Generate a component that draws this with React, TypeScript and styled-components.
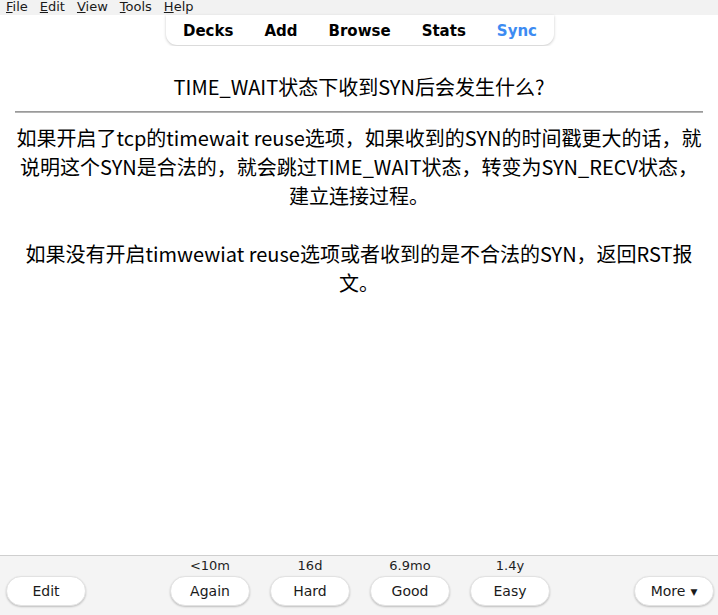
import React from 'react';
import styled, { createGlobalStyle } from 'styled-components';

const GlobalStyle = createGlobalStyle`
  html, body {
    margin: 0;
    padding: 0;
    height: 100%;
    background: #ffffff;
  }

  #root {
    height: 100%;
  }
`;

const uiFont = '"DejaVu Sans", "Liberation Sans", sans-serif';
const cardFont = '"Noto Sans CJK SC", "Noto Sans", sans-serif';

const Window = styled.div`
  display: flex;
  flex-direction: column;
  height: 100vh;
  overflow: hidden;
  font-family: ${uiFont};
  color: #000;
`;

const MenuBar = styled.div`
  display: flex;
  align-items: flex-start;
  height: 15px;
  flex: 0 0 15px;
  background: #f2f2f2;
  font-size: 13px;
  line-height: 13px;
  overflow: hidden;
`;

const MenuItem = styled.span`
  padding: 0 6px;
  color: #1a1a1a;

  &:first-child {
    padding-left: 6px;
  }

  u {
    text-underline-offset: 1px;
  }
`;

const TopArea = styled.div`
  display: flex;
  justify-content: center;
  flex: 0 0 31px;
  background: #ffffff;
`;

const Toolbar = styled.nav`
  display: flex;
  align-items: center;
  gap: 31px;
  height: 30px;
  padding: 1px 17.5px 0;
  box-sizing: border-box;
  margin-left: 2px;
  background: #ffffff;
  border-radius: 0 0 11px 11px;
  box-shadow: 0 1px 3px rgba(0, 0, 0, 0.22);
`;

const ToolbarLink = styled.span<{ $active?: boolean }>`
  font-size: 15px;
  font-weight: bold;
  color: ${({ $active }) => ($active ? '#3d8bf2' : '#000000')};
`;

const Card = styled.main`
  flex: 1;
  padding: 26px 15px 0;
  font-family: ${cardFont};
  font-size: 20px;
  text-align: center;
  background: #ffffff;
  overflow: hidden;
`;

const Question = styled.div`
  line-height: 29px;
`;

const Divider = styled.hr`
  margin: 10px 0 10px;
  height: 0;
  border: none;
  border-top: 1px solid #9a9a9a;
  border-bottom: 1px solid #b4b4b4;
`;

const Answer = styled.div`
  line-height: 29px;
`;

const BottomBar = styled.footer`
  display: grid;
  grid-template-columns: 1fr auto 1fr;
  align-items: end;
  flex: 0 0 60px;
  box-sizing: border-box;
  padding: 0 4px 9px 6px;
  background: #f4f4f4;
  border-top: 1px solid #cfcfcf;
`;

const Side = styled.div<{ $align: 'start' | 'end' }>`
  display: flex;
  justify-content: ${({ $align }) => ($align === 'start' ? 'flex-start' : 'flex-end')};
`;

const EaseGroup = styled.div`
  display: flex;
  gap: 20px;
`;

const EaseCell = styled.div`
  display: flex;
  flex-direction: column;
  align-items: center;
  gap: 2px;
`;

const EaseTime = styled.span`
  font-size: 13px;
  line-height: 16px;
  color: #1e1e1e;
`;

const PillButton = styled.button`
  width: 80px;
  height: 30px;
  padding: 0;
  border: 1px solid #e2e2e2;
  border-radius: 15px;
  background: #ffffff;
  box-shadow: 0 1px 2px rgba(0, 0, 0, 0.22);
  font-family: ${uiFont};
  font-size: 14px;
  color: #1a1a1a;
  cursor: pointer;
`;

const Caret = styled.span`
  font-size: 9px;
  margin-left: 5px;
  vertical-align: 1px;
`;

const menus = ['File', 'Edit', 'View', 'Tools', 'Help'];
const links = ['Decks', 'Add', 'Browse', 'Stats', 'Sync'];
const eases = [
  { label: 'Again', time: '<10m' },
  { label: 'Hard', time: '16d' },
  { label: 'Good', time: '6.9mo' },
  { label: 'Easy', time: '1.4y' }
];

const App: React.FC = () => {
  return (
    <>
      <GlobalStyle />
      <Window>
        <MenuBar>
          {menus.map((m) => (
            <MenuItem key={m}>
              <u>{m[0]}</u>{m.slice(1)}
            </MenuItem>
          ))}
        </MenuBar>
        <TopArea>
          <Toolbar>
            {links.map((l) => (
              <ToolbarLink key={l} $active={l === 'Sync'}>{l}</ToolbarLink>
            ))}
          </Toolbar>
        </TopArea>
        <Card>
          <Question>TIME_WAIT状态下收到SYN后会发生什么?</Question>
          <Divider />
          <Answer>
            如果开启了tcp的timewait reuse选项，如果收到的SYN的时间戳更大的话，就说明这个SYN是合法的，就会跳过TIME_WAIT状态，转变为SYN_RECV状态，建立连接过程。
            <br />
            <br />
            如果没有开启timwewiat reuse选项或者收到的是不合法的SYN，返回RST报文。
          </Answer>
        </Card>
        <BottomBar>
          <Side $align='start'>
            <PillButton>Edit</PillButton>
          </Side>
          <EaseGroup>
            {eases.map((e) => (
              <EaseCell key={e.label}>
                <EaseTime>{e.time}</EaseTime>
                <PillButton>{e.label}</PillButton>
              </EaseCell>
            ))}
          </EaseGroup>
          <Side $align='end'>
            <PillButton>
              More<Caret>▼</Caret>
            </PillButton>
          </Side>
        </BottomBar>
      </Window>
    </>
  );
};

export default App;
